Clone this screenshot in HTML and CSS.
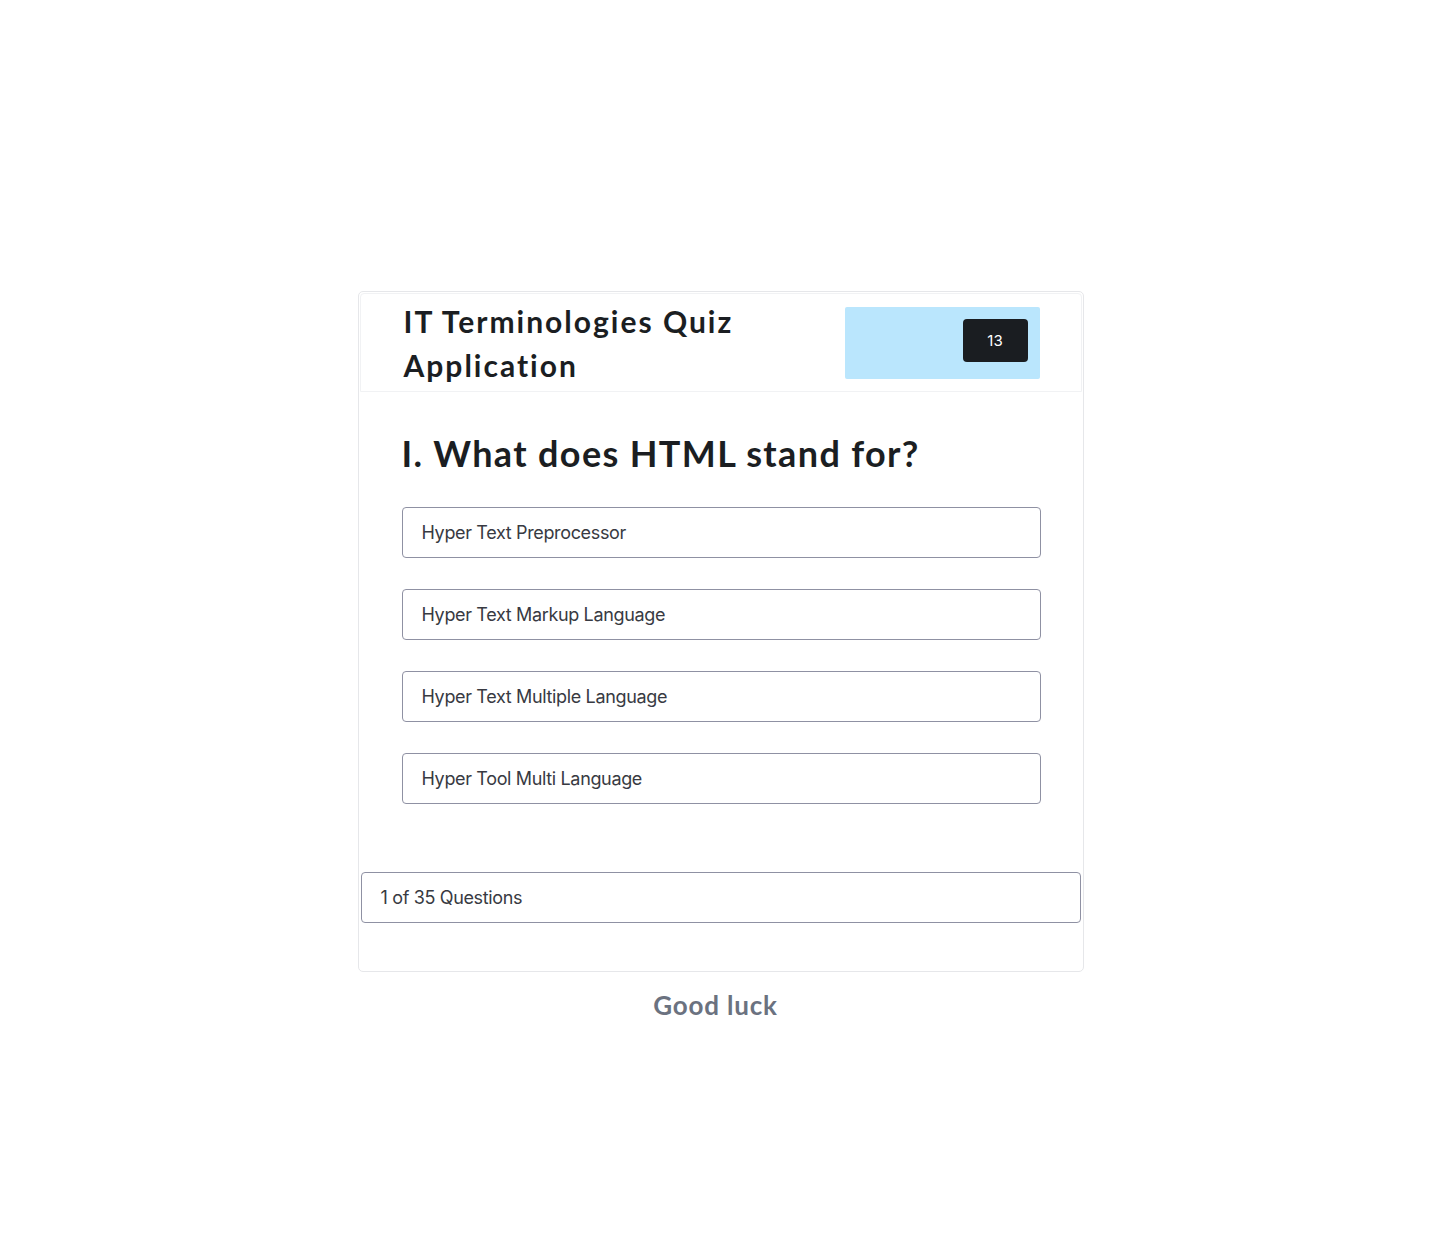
FILE: index.html
```html
<!DOCTYPE html>
<html lang="en">
<head>
<meta charset="utf-8">
<title>IT Terminologies Quiz Application</title>
<link rel="stylesheet" href="styles.css">
</head>
<body>
<main class="page">
  <section class="card">
    <header class="card-header">
      <h1 class="title">IT Terminologies Quiz Application</h1>
      <div class="timer-box">
        <button class="timer" type="button">13</button>
      </div>
    </header>
    <div class="card-body">
      <h2 class="question">I. What does HTML stand for?</h2>
      <ul class="options">
        <li class="option">Hyper Text Preprocessor</li>
        <li class="option">Hyper Text Markup Language</li>
        <li class="option">Hyper Text Multiple Language</li>
        <li class="option">Hyper Tool Multi Language</li>
      </ul>
    </div>
    <div class="card-footer">
      <div class="progress">1 of 35 Questions</div>
    </div>
  </section>
  <p class="good-luck">Good luck</p>
</main>
</body>
</html>
```
FILE: styles.css
```css
* { box-sizing: border-box; }
html, body { margin: 0; padding: 0; background: #fff; }
body {
  font-family: "Open Sans", "Liberation Sans", sans-serif;
  color: #1b1e22;
}
.page {
  display: flex;
  flex-direction: column;
  align-items: center;
  padding-top: 291px;
  padding-left: 1px;
}
.card {
  width: 726px;
  border: 1px solid #e6e7ea;
  border-radius: 5px;
  padding: 1px;
  display: flex;
  flex-direction: column;
}
.card-header {
  display: flex;
  align-items: center;
  justify-content: space-between;
  padding: 0 41px 0 43px;
  height: 99px;
  border: 1px solid #f1f2f4;
  border-radius: 4px 4px 0 0;
}
.title {
  margin: 0;
  max-width: 420px;
  font-family: "Lato", sans-serif;
  font-weight: 700;
  font-size: 30px;
  line-height: 44px;
  letter-spacing: 2px;
  color: #1b1e22;
}
.timer-box {
  width: 195px;
  height: 72px;
  background: #bae6fd;
  border-radius: 2px;
  display: flex;
  justify-content: flex-end;
  align-items: flex-start;
  padding: 12px 12px 0 0;
}
.timer {
  width: 65px;
  height: 43px;
  border: none;
  border-radius: 4px;
  background: #1a1d21;
  color: #fff;
  font-family: "Inter", sans-serif;
  font-size: 15px;
  padding: 0;
}
.card-body {
  padding: 38px 41px 0 42px;
}
.question {
  margin: 0 0 31px;
  font-family: "Lato", sans-serif;
  font-weight: 700;
  font-size: 36px;
  line-height: 46px;
  letter-spacing: 1.35px;
  color: #1b1e22;
}
.options {
  list-style: none;
  margin: 0;
  padding: 0;
  display: flex;
  flex-direction: column;
  gap: 31px;
}
.option {
  height: 51px;
  border: 1px solid #8f91a3;
  border-radius: 4px;
  display: flex;
  align-items: center;
  padding: 0 19px;
  font-family: "Inter", sans-serif;
  font-size: 18px;
  font-weight: 400;
  color: #383a42;
  letter-spacing: -0.35px;
}
.card-footer {
  padding: 68px 1px 47px 1px;
}
.progress {
  height: 51px;
  border: 1px solid #8f91a3;
  border-radius: 4px;
  display: flex;
  align-items: center;
  padding: 0 19px;
  font-family: "Inter", sans-serif;
  font-size: 18px;
  color: #383a42;
  letter-spacing: -0.35px;
}
.good-luck {
  margin: 17px 0 0;
  padding-right: 10px;
  font-family: "Lato", sans-serif;
  font-weight: 700;
  font-size: 26px;
  line-height: 32px;
  letter-spacing: 0.8px;
  color: #6b7280;
}
```
